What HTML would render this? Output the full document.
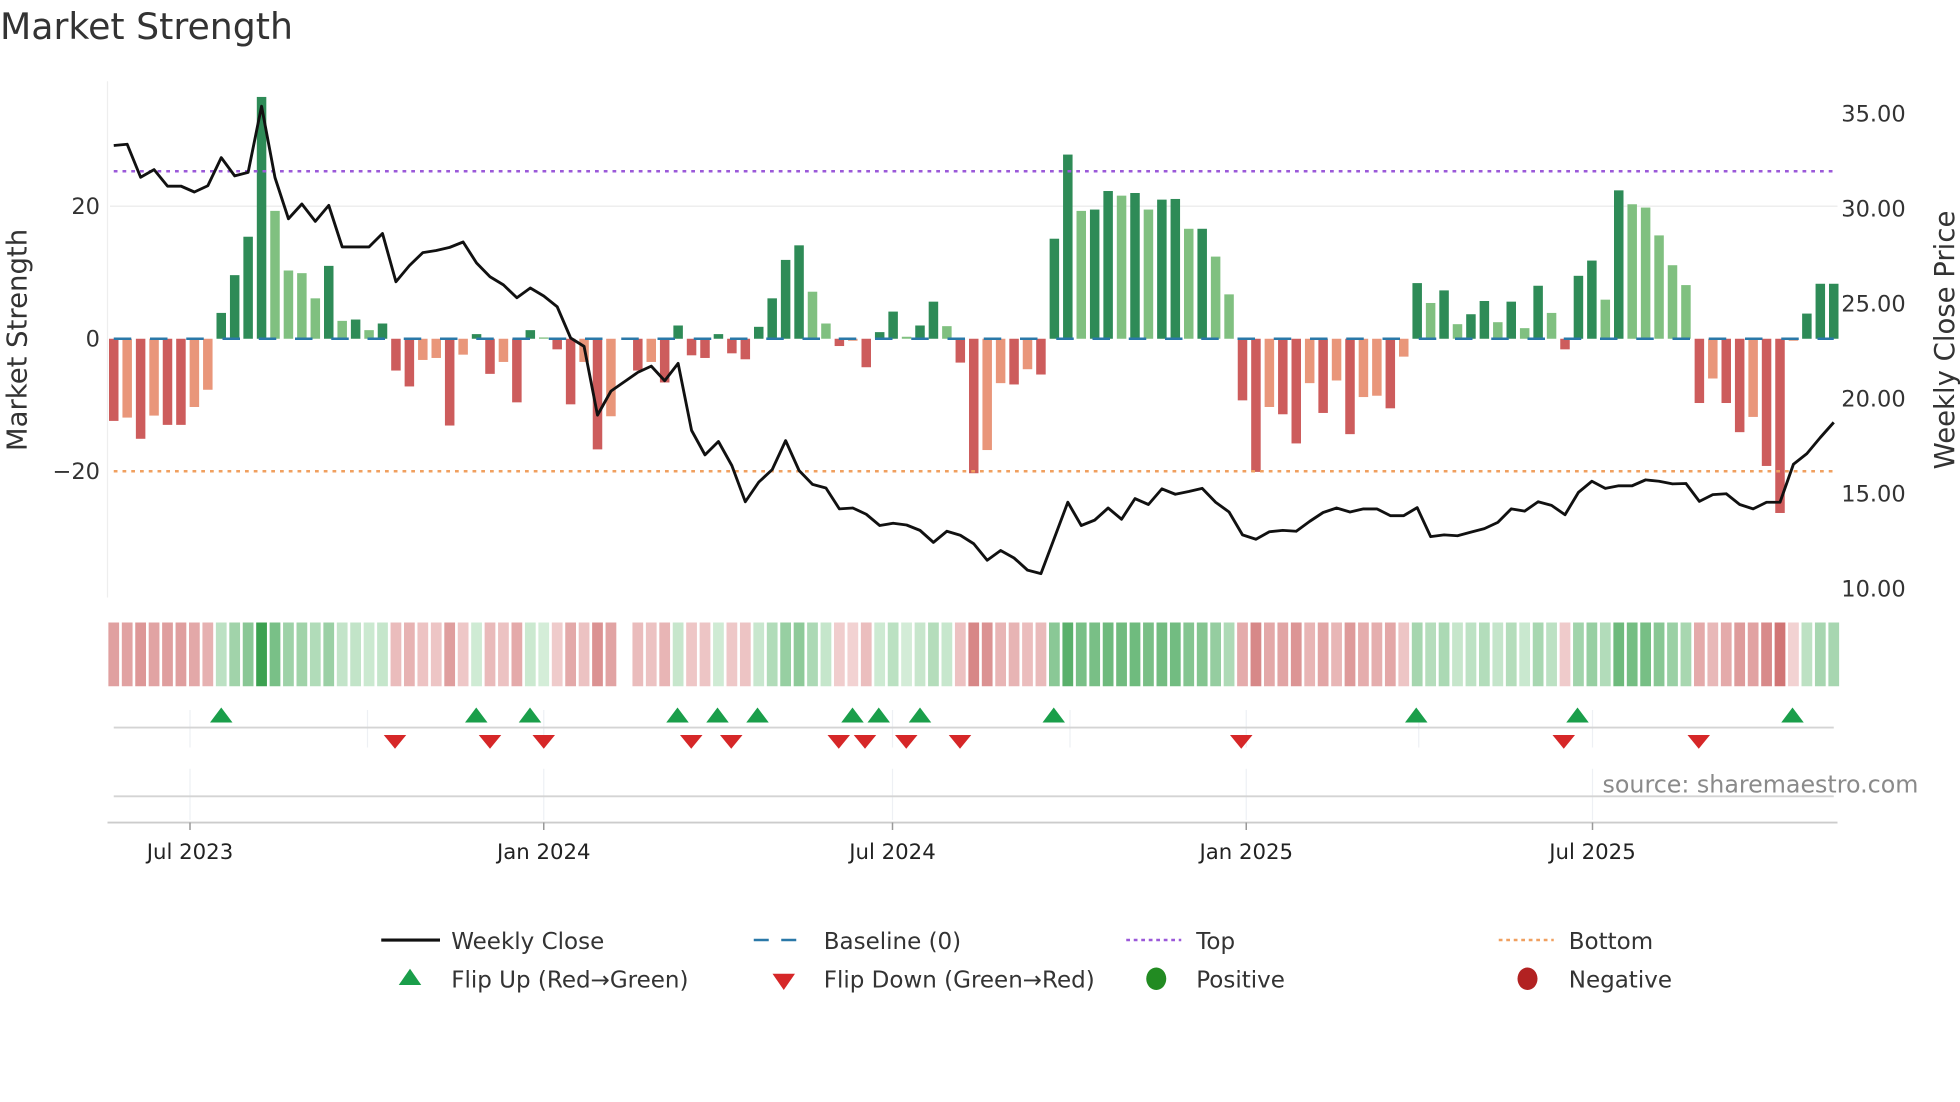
<!DOCTYPE html>
<html><head><meta charset="utf-8"><style>
html,body{margin:0;padding:0;background:#fff;width:1960px;height:1102px;overflow:hidden}
svg{display:block;font-family:"DejaVu Sans","Liberation Sans",sans-serif}
</style></head><body>
<svg id="s" width="1960" height="1102" viewBox="0 0 1568 881.6" xmlns="http://www.w3.org/2000/svg">
<rect width="1568" height="882" fill="#fff"/>
<text x="0" y="31" font-size="29" fill="#333">Market Strength</text>
<line x1="86" y1="65" x2="86" y2="478" stroke="#eee" stroke-width="1"/>
<line x1="88" y1="165" x2="1470" y2="165" stroke="#eeeeee" stroke-width="1.2"/>
<g font-size="18" fill="#333">
<text x="80" y="171" text-anchor="end">20</text>
<text x="80" y="277" text-anchor="end">0</text>
<text x="80" y="383" text-anchor="end">−20</text>
<text x="1473" y="97">35.00</text>
<text x="1473" y="173">30.00</text>
<text x="1473" y="249">25.00</text>
<text x="1473" y="325">20.00</text>
<text x="1473" y="401">15.00</text>
<text x="1473" y="477">10.00</text>
</g>
<text transform="translate(21,272) rotate(-90)" font-size="22" fill="#333" text-anchor="middle">Market Strength</text>
<text transform="translate(1563,272) rotate(-90)" font-size="22" fill="#333" text-anchor="middle">Weekly Close Price</text>
<g id="bars"></g>
<line x1="91" y1="137" x2="1467" y2="137" stroke="#9b59d9" stroke-width="2" stroke-dasharray="3 4"/>
<line x1="91" y1="377" x2="1467" y2="377" stroke="#f0a060" stroke-width="2" stroke-dasharray="3 4"/>
<line x1="91" y1="271" x2="1467" y2="271" stroke="#2a78a8" stroke-width="2" stroke-dasharray="14 15"/>
<polyline id="price" fill="none" stroke="#111" stroke-width="2.3" stroke-linejoin="round"/>
<g id="heat"></g>
<g stroke="#eef0f4" stroke-width="1">
<line x1="152" y1="568" x2="152" y2="598"/><line x1="435" y1="568" x2="435" y2="598"/><line x1="714" y1="568" x2="714" y2="598"/><line x1="997" y1="568" x2="997" y2="598"/><line x1="1274" y1="568" x2="1274" y2="598"/><line x1="294" y1="568" x2="294" y2="598"/><line x1="856" y1="568" x2="856" y2="598"/><line x1="1135" y1="568" x2="1135" y2="598"/>
<line x1="152" y1="615" x2="152" y2="656"/><line x1="435" y1="615" x2="435" y2="656"/><line x1="714" y1="615" x2="714" y2="656"/><line x1="997" y1="615" x2="997" y2="656"/><line x1="1274" y1="615" x2="1274" y2="656"/>
</g>
<line x1="91" y1="582" x2="1467" y2="582" stroke="#d4d4d4" stroke-width="1.5"/>
<line x1="91" y1="637" x2="1467" y2="637" stroke="#d4d4d4" stroke-width="1.5"/>
<line x1="86" y1="658" x2="1470" y2="658" stroke="#ccc" stroke-width="1.5"/>
<g stroke="#999" stroke-width="1.2"><line x1="152" y1="658" x2="152" y2="664"/><line x1="435" y1="658" x2="435" y2="664"/><line x1="714" y1="658" x2="714" y2="664"/><line x1="997" y1="658" x2="997" y2="664"/><line x1="1274" y1="658" x2="1274" y2="664"/></g>
<g id="marks"></g>
<text x="1282" y="634" font-size="19" fill="#8a8a8a">source: sharemaestro.com</text>
<g font-size="17" fill="#222" text-anchor="middle">
<text x="152" y="687">Jul 2023</text><text x="435" y="687">Jan 2024</text><text x="714" y="687">Jul 2024</text><text x="997" y="687">Jan 2025</text><text x="1274" y="687">Jul 2025</text>
</g>
<g font-size="18.4" fill="#333">
<line x1="305" y1="752" x2="352" y2="752" stroke="#111" stroke-width="2.5"/>
<text x="361" y="759">Weekly Close</text>
<line x1="603" y1="752" x2="647" y2="752" stroke="#2a78a8" stroke-width="2" stroke-dasharray="12 10"/>
<text x="659" y="759">Baseline (0)</text>
<line x1="901" y1="752" x2="945" y2="752" stroke="#9b59d9" stroke-width="2" stroke-dasharray="3 3"/>
<text x="957" y="759">Top</text>
<line x1="1199" y1="752" x2="1243" y2="752" stroke="#f0a060" stroke-width="2" stroke-dasharray="3 3"/>
<text x="1255" y="759">Bottom</text>
<polygon points="328,775 319,788 337,788" fill="#1a9e4a"/>
<text x="361" y="790">Flip Up (Red→Green)</text>
<polygon points="618,779 636,779 627,792" fill="#d62728"/>
<text x="659" y="790">Flip Down (Green→Red)</text>
<ellipse cx="925" cy="783" rx="8" ry="9" fill="#228b22"/>
<text x="957" y="790">Positive</text>
<ellipse cx="1222" cy="783" rx="8" ry="9" fill="#b22222"/>
<text x="1255" y="790">Negative</text>
</g>
</svg>
<script>
var V=[-12.4,-11.9,-15.1,-11.6,-13,-13,-10.3,-7.7,3.9,9.6,15.4,36.5,19.3,10.3,9.9,6.1,11,2.7,2.9,1.3,2.3,-4.8,-7.2,-3.2,-2.9,-13.1,-2.4,0.7,-5.3,-3.5,-9.6,1.3,0.2,-1.6,-9.9,-3.5,-16.7,-11.7,null,-4.8,-3.5,-6.6,2,-2.5,-2.9,0.7,-2.2,-3.1,1.8,6.1,11.9,14.1,7.1,2.3,-1.1,-0.3,-4.3,1,4.1,0.3,2,5.6,1.9,-3.6,-20.3,
-16.8,-6.7,-6.9,-4.6,-5.4,15.1,27.8,19.3,19.5,22.3,21.6,22,19.5,21,21.1,16.6,16.6,12.4,6.7,-9.3,-20.1,-10.3,-11.4,-15.8,-6.7,-11.2,-6.3,-14.4,-8.8,-8.6,-10.5,-2.7,8.4,5.4,7.3,2.2,3.7,5.7,2.5,5.6,1.6,8,3.9,-1.6,9.5,11.8,5.9,22.4,20.3,19.8,15.6,11.1,8.1,-9.7,-6,-9.7,-14.1,-11.8,-19.2,-26.3,-0.3,3.8,8.3,8.3];
var P1=[326,323,397,380,417,417,430,416,353,394,386,238,398,490,457,496,460,553,553,553,523,631,595,566,561,554,542,589,620,638,667,645,663,687,757,776,930,876,855,834,820,853,814,964,1019,989,1043,1124,1080,1052,987,1054,1085,1093,1140,1138,1152,1177,1172,1176,1188,1215,1190,1199,1218];
var P2=[1255,1233,1250,1277,1285,1205,1125,1177,1165,1138,1163,1117,1130,1095,1107,1101,1094,1125,1147,1198,1208,1191,1188,1190,1168,1148,1138,1147,1140,1140,1155,1155,1137,1202,1198,1200,1192,1184,1170,1140,1145,1124,1132,1153,1103,1078,1094,1088,1088,1075,1078,1084,1083,1123,1108,1106,1130,1140,1125,1125,1040,1016,980,946];
var NS="http://www.w3.org/2000/svg";
function el(t,a,p){var e=document.createElementNS(NS,t);for(var k in a)e.setAttribute(k,a[k]);p.appendChild(e);return e;}
function X(i){return 91+i*10.75;}
function mix(a,b,t){var r=[];for(var k=0;k<3;k++)r.push(Math.round(a[k]+(b[k]-a[k])*t));return "rgb("+r.join(",")+")";}
var bars=document.getElementById("bars"),heat=document.getElementById("heat");
for(var i=0;i<V.length;i++){
 var v=V[i];if(v===null)continue;
 var pv=i>0&&V[i-1]!==null?V[i-1]:0;
 var dark=(Math.abs(v)>=Math.abs(pv))||(v*pv<0);
 var c=v>=0?(dark?"#2e8b57":"#80c080"):(dark?"#cd5c5c":"#e9967a");
 var h=Math.abs(v)*5.3;
 if(h>0.5)el("rect",{x:X(i)-3.8,y:v>=0?271-h:271,width:7.6,height:h,fill:c},bars);
 var t;
 if(v>=0){t=Math.min(1,v/37);c=mix([214,238,218],[58,160,78],Math.pow(t,0.8));}
 else{t=Math.min(1,-v/27);c=mix([243,213,213],[208,115,115],Math.pow(t,0.8));}
 el("rect",{x:X(i)-4.3,y:498,width:8.6,height:51,fill:c},heat);
}
var pts=[];
for(var j=0;j<P1.length;j++)pts.push(X(j)+","+(P1[j]/2.8).toFixed(1));
for(var j=0;j<P2.length;j++)pts.push(X(65+j)+","+(P2[j]/2.8).toFixed(1));
document.getElementById("price").setAttribute("points",pts.join(" "));
var m=document.getElementById("marks");
[177,381,424,542,574,606,682,703,736,843,1133,1262,1434].forEach(function(x){el("polygon",{points:x+",566 "+(x-9)+",578 "+(x+9)+",578",fill:"#1a9e4a"},m);});
[316,392,435,553,585,671,692,725,768,993,1251,1359].forEach(function(x){el("polygon",{points:(x-9)+",588 "+(x+9)+",588 "+x+",599",fill:"#d62728"},m);});
</script>
</body></html>
